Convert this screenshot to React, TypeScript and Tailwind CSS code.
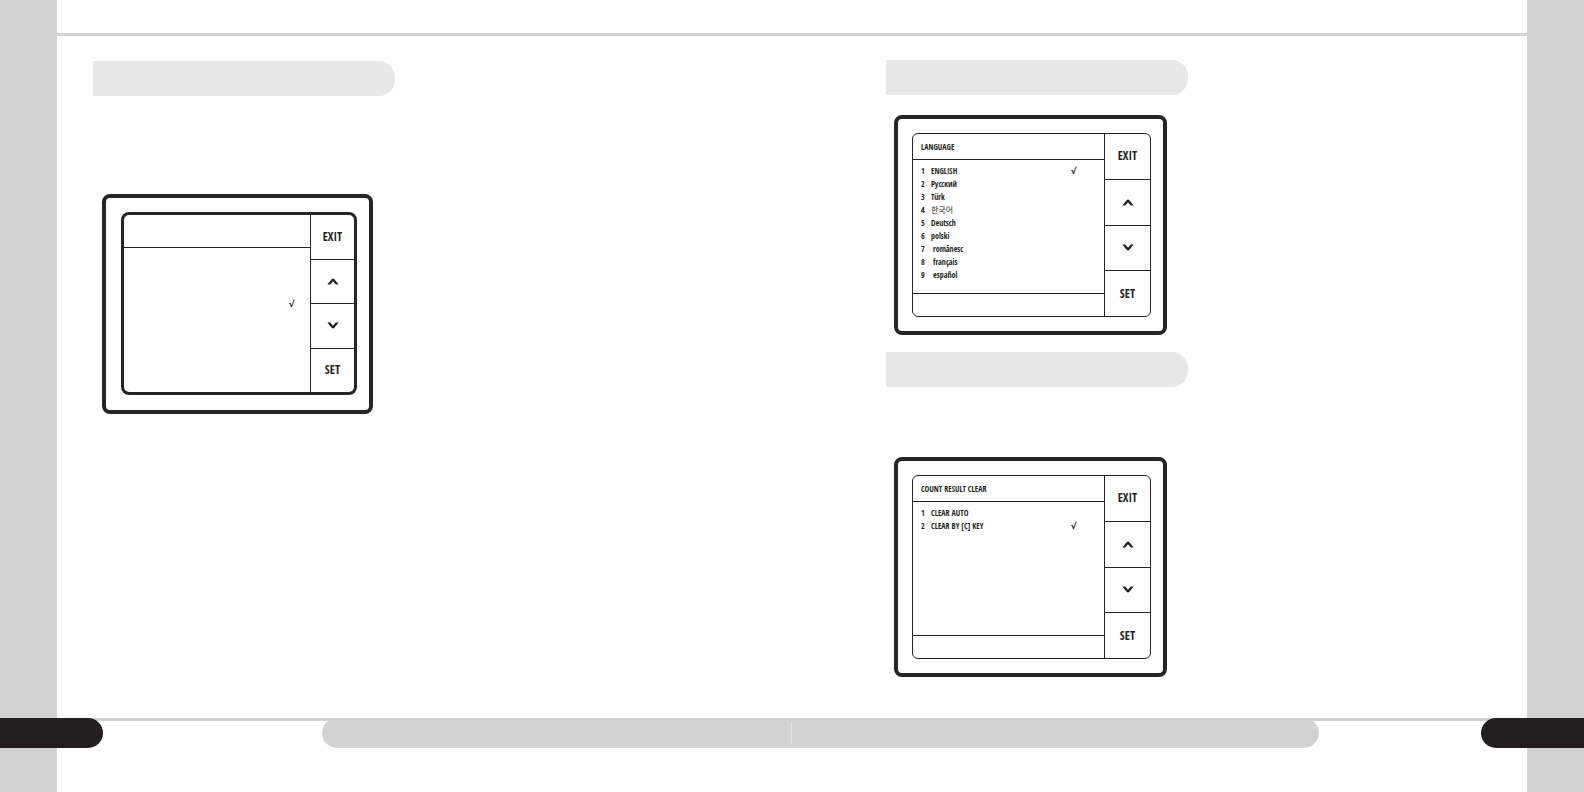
import { clsx } from 'clsx';

interface MenuItem {
  label: string;
  checked?: boolean;
  indent?: boolean;
}

interface ScreenProps {
  title?: string;
  items: MenuItem[];
}

const languages: MenuItem[] = [
  { label: 'ENGLISH', checked: true },
  { label: 'Русский' },
  { label: 'Türk' },
  { label: '한국어' },
  { label: 'Deutsch' },
  { label: 'polski' },
  { label: 'românesc', indent: true },
  { label: 'français', indent: true },
  { label: 'español', indent: true },
];

const clearModes: MenuItem[] = [
  { label: 'CLEAR AUTO' },
  { label: 'CLEAR BY [C] KEY', checked: true },
];

function Arrow({ down }: { down?: boolean }) {
  return (
    <svg viewBox="0 0 12 7" className="w-3 h-[7px]" fill="currentColor" aria-hidden="true">
      {down ? (
        <path d="M0.4 0.5H3.2L6 3.7L8.8 0.5H11.6L7.4 5.8Q6 7 4.6 5.8Z" />
      ) : (
        <path d="M0.4 6.5H3.2L6 3.3L8.8 6.5H11.6L7.4 1.2Q6 0 4.6 1.2Z" />
      )}
    </svg>
  );
}

// Key column on the right side of every screen
function Keys({ narrow }: { narrow?: boolean }) {
  const key = 'flex-1 flex items-center justify-center border-[#262425] text-[12px] leading-3 font-bold';
  return (
    <div className={clsx('shrink-0 flex flex-col border-l border-[#262425]', narrow ? 'w-11' : 'w-[46px]')}>
      <button className={clsx(key, 'border-b')}>EXIT</button>
      <button className={clsx(key, 'border-b')} aria-label="Up">
        <Arrow />
      </button>
      <button className={clsx(key, 'border-b')} aria-label="Down">
        <Arrow down />
      </button>
      <button className={key}>SET</button>
    </div>
  );
}

function Screen({ title, items }: ScreenProps) {
  return (
    <div className="w-[273px] h-[220px] flex border-4 border-[#262425] rounded-lg pt-[14px] pb-[14px] pl-[14px] pr-3">
      <div className="flex-1 flex border border-[#262425] rounded-md">
        <div className="flex-1 flex flex-col">
          <h2 className="h-[26px] flex items-center pl-2 border-b border-[#262425] text-[8px] font-normal">
            {title}
          </h2>
          <ol className="flex-1 pt-1 pl-2 pr-[28px]">
            {items.map((item, i) => (
              <li key={item.label} className="flex text-[8px] leading-[13px]">
                <span className="w-[10px]">{i + 1}</span>
                <span className={clsx('flex-1', item.indent && 'pl-[2px]')}>{item.label}</span>
                {item.checked && <span className="text-[9px] font-bold">√</span>}
              </li>
            ))}
          </ol>
          <div className="h-[23px] border-t border-[#262425]" />
        </div>
        <Keys />
      </div>
    </div>
  );
}

// Screen with a taller header, thicker frame and no footer bar
function BlankScreen() {
  return (
    <div className="w-[271px] h-[220px] flex border-4 border-[#262425] rounded-lg pt-[14px] pb-[15px] pl-[15px] pr-3">
      <div className="flex-1 flex border-[3px] border-[#262425] rounded-lg">
        <div className="flex-1 flex flex-col">
          <div className="h-[33px] border-b border-[#262425]" />
          <div className="flex-1 flex justify-end pt-[49px] pr-4 text-[9px] leading-[13px] font-bold">√</div>
        </div>
        <Keys narrow />
      </div>
    </div>
  );
}

function SectionTab() {
  return <div className="w-[302px] h-[35px] rounded-r-2xl bg-[#e8e8e8]" />;
}

export default function App() {
  return (
    <div className="min-h-screen flex flex-col bg-white border-x-[57px] border-[#d2d2d2] text-[#231f20] font-['Open_Sans_Condensed','Liberation_Sans_Narrow','Liberation_Sans','Noto_Sans_CJK_KR',sans-serif]">
      <header className="h-9 border-b-[3px] border-[#d4d4d4]" />

      <main className="flex-1 grid grid-cols-2">
        <section className="pt-[25px] pl-9">
          <SectionTab />
          <div className="pt-[98px] pl-[9px]">
            <BlankScreen />
          </div>
        </section>

        <section className="pt-6 pl-[94px]">
          <SectionTab />
          <div className="pt-5 pl-2">
            <Screen title="LANGUAGE" items={languages} />
          </div>
          <div className="pt-[17px]">
            <SectionTab />
          </div>
          <div className="pt-[70px] pl-2">
            <Screen title="COUNT RESULT CLEAR" items={clearModes} />
          </div>
        </section>
      </main>

      <div className="h-[3px] bg-[#d2d2d2]" />
      <footer className="-mt-[3px] -mx-[57px] pb-11 flex">
        <div className="w-[103px] h-[30px] rounded-r-full bg-[#231f20]" />
        <div className="flex-1 h-[30px] ml-[219px] mr-[162px] py-1 rounded-full bg-[#d2d2d2]">
          <div className="ml-[47%] w-px h-full bg-[#e2e2e2]" />
        </div>
        <div className="w-[103px] h-[30px] rounded-l-full bg-[#231f20]" />
      </footer>
    </div>
  );
}
